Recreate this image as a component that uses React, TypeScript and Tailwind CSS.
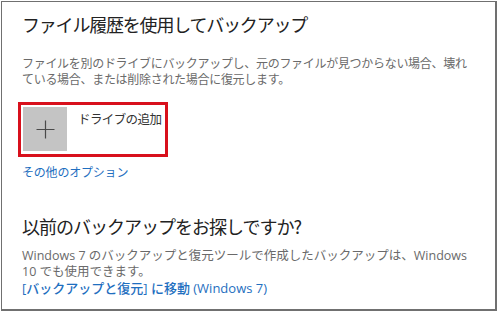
export default function App() {
  const font = {
    fontFamily: '"Segoe UI", "Open Sans", "Noto Sans CJK JP", sans-serif',
  }
  return (
    <div className="w-[500px] h-[312px] bg-white p-px" style={font}>
      <div className="h-[310px] w-[496px] border-l border-t border-r-2 border-b-2 border-[#707070] pl-[20px] pt-[10px] flex flex-col">
        {/* File history */}
        <h1 className="text-[18px] leading-[24px] tracking-[-1.2px] text-[#222]" style={{ fontFamily: '"Noto Sans CJK JP", sans-serif' }}>
          ファイル履歴を使用してバックアップ
        </h1>
        <p className="mt-[20px] text-[12px] leading-[16px] tracking-[-0.3px] text-[#6a6a6a] w-[460px]">
          ファイルを別のドライブにバックアップし、元のファイルが見つからない場合、壊れ
          <br />
          ている場合、または削除された場合に復元します。
        </p>

        {/* Add drive (highlighted) */}
        <div className="mt-[14px] -ml-[4px] w-[150px] h-[55px] border-[3px] border-[#d8101c] pt-[2px] pl-[2px] flex items-start">
          <div className="w-[44px] h-[44px] bg-[#c4c4c4] flex items-center justify-center">
            <svg width="19" height="19" viewBox="0 0 19 19">
              <path d="M9.5 0.5v18M0.5 9.5h18" stroke="#4a4a4a" strokeWidth="1.2" fill="none" />
            </svg>
          </div>
          <span className="ml-[11px] mt-[5px] text-[12.5px] leading-[16px] tracking-[-0.6px] text-[#333]">
            ドライブの追加
          </span>
        </div>

        <a className="mt-[8px] text-[12px] leading-[16px] tracking-[-0.2px] text-[#1f6fc0]">
          その他のオプション
        </a>

        {/* Older backups */}
        <h2 className="mt-[33px] text-[18px] leading-[24px] tracking-[-1px] text-[#222]" style={{ fontFamily: '"Noto Sans CJK JP", sans-serif' }}>
          以前のバックアップをお探しですか?
        </h2>
        <p className="mt-[10px] text-[12.5px] leading-[16px] text-[#6a6a6a] w-[465px]">
          Windows 7 のバックアップと復元ツールで作成したバックアップは、Windows
          <br />
          10 でも使用できます。
        </p>
        <a className="text-[13px] leading-[16px] font-medium text-[#1f6fc0]">
          [バックアップと復元] に移動 (Windows 7)
        </a>
      </div>
    </div>
  )
}
